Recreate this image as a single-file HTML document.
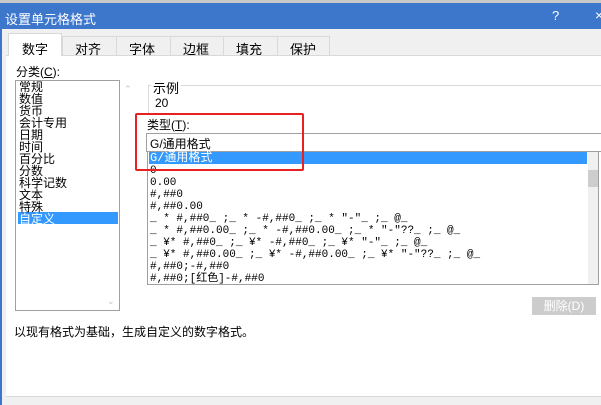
<!DOCTYPE html>
<html><head><meta charset="utf-8"><style>
*{margin:0;padding:0;box-sizing:border-box}
body{width:601px;height:405px;overflow:hidden;background:#f0f0f0;position:relative;font-family:"Liberation Sans","Noto Sans CJK SC",sans-serif;font-size:12px;color:#000}
.a{position:absolute;white-space:nowrap}
.t{font-family:"SimSun","Noto Sans CJK SC",sans-serif;font-size:12px;line-height:12px}
.m{font-family:"Liberation Mono","Noto Sans CJK SC",monospace;font-size:11px;line-height:12px}
</style></head><body>
<div class="a" style="left:0;top:0;width:601px;height:3px;background:#c8c8c8"></div>
<div class="a" style="left:0;top:3px;width:601px;height:26px;background:#3d77cc"></div>
<div class="a" style="left:5px;top:9px;color:#fff;font-size:13px">设置单元格格式</div>
<div class="a" style="left:552px;top:8px;color:#fff;font-size:13px">?</div>
<div class="a" style="left:595px;top:7px;color:#fff;font-size:14px">×</div>
<div class="a" style="left:0;top:29px;width:2px;height:376px;background:#3d77cc"></div>
<!-- tabs -->
<div class="a" style="left:6px;top:55px;width:595px;height:342px;background:#fff;border-top:1px solid #d9d9d9;border-bottom:1px solid #d9d9d9"></div>
<div class="a" style="left:8px;top:33px;width:54px;height:23px;background:#fff;border:1px solid #d9d9d9;border-bottom:none"></div>
<div class="a" style="left:62px;top:36px;width:268px;height:19px;border:1px solid #d9d9d9;border-bottom:none"></div>
<div class="a" style="left:116px;top:36px;width:1px;height:19px;background:#d9d9d9"></div>
<div class="a" style="left:170px;top:36px;width:1px;height:19px;background:#d9d9d9"></div>
<div class="a" style="left:223px;top:36px;width:1px;height:19px;background:#d9d9d9"></div>
<div class="a" style="left:277px;top:36px;width:1px;height:19px;background:#d9d9d9"></div>
<div class="a" style="left:22px;top:39px;font-size:13px">数字</div>
<div class="a" style="left:75px;top:39px;font-size:13px">对齐</div>
<div class="a" style="left:129px;top:39px;font-size:13px">字体</div>
<div class="a" style="left:183px;top:39px;font-size:13px">边框</div>
<div class="a" style="left:236px;top:39px;font-size:13px">填充</div>
<div class="a" style="left:290px;top:39px;font-size:13px">保护</div>
<div class="a" style="left:16px;top:63px">分类(<u>C</u>):</div>
<!-- left list -->
<div class="a" style="left:15px;top:80px;width:105px;height:231px;border:1px solid #a0a0a0;background:#fff"></div>
<div class="a" style="left:18px;top:212px;width:100px;height:12px;background:#3399ff"></div>
<div class="a t" style="left:19px;top:81px">常规<br>数值<br>货币<br>会计专用<br>日期<br>时间<br>百分比<br>分数<br>科学记数<br>文本<br>特殊<br><span style="color:#fff">自定义</span></div>
<div class="a" style="left:124px;top:84px;color:#c0c0c0;font-size:9px">⌃</div>
<div class="a" style="left:107px;top:296px;color:#c0c0c0;font-size:9px">⌄</div>
<!-- sample -->
<div class="a" style="left:148px;top:85px;width:453px;height:1px;background:#d9d9d9"></div>
<div class="a" style="left:148px;top:85px;width:1px;height:28px;background:#d9d9d9"></div>
<div class="a" style="left:151px;top:78px;background:#fff;padding:0 2px;font-size:13px">示例</div>
<div class="a" style="left:155px;top:96px">20</div>
<div class="a" style="left:147px;top:116px;font-size:12px">类型(<u>T</u>):</div>
<div class="a" style="left:146px;top:133px;width:460px;height:19px;border:1px solid #a0a0a0;border-right:none;background:#fff"></div>
<div class="a" style="left:150px;top:135px;font-size:12px">G/通用格式</div>
<!-- list -->
<div class="a" style="left:147px;top:151px;width:452px;height:134px;border:1px solid #a0a0a0;background:#fff"></div>
<div class="a" style="left:149px;top:152px;width:438px;height:12px;background:#3399ff"></div>
<div class="a" style="left:588px;top:152px;width:10px;height:132px;background:#f0f0f0"></div>
<div class="a" style="left:588px;top:170px;width:10px;height:17px;background:#cdcdcd"></div>
<div class="a m" style="left:150px;top:152px"><span style="color:#fff;font-size:12px">G/通用格式</span><br>0<br>0.00<br>#,##0<br>#,##0.00<br>_ * #,##0_ ;_ * -#,##0_ ;_ * "-"_ ;_ @_<br>_ * #,##0.00_ ;_ * -#,##0.00_ ;_ * "-"??_ ;_ @_<br>_ ¥* #,##0_ ;_ ¥* -#,##0_ ;_ ¥* "-"_ ;_ @_<br>_ ¥* #,##0.00_ ;_ ¥* -#,##0.00_ ;_ ¥* "-"??_ ;_ @_<br>#,##0;-#,##0<br>#,##0;[红色]-#,##0</div>
<!-- red box -->
<div class="a" style="left:135px;top:113px;width:169px;height:58px;border:2.5px solid #e82020;border-radius:2px"></div>
<!-- delete -->
<div class="a" style="left:532px;top:297px;width:64px;height:18px;background:#cccccc;color:#fff;text-align:center;line-height:18px;font-size:12px">删除(D)</div>
<div class="a" style="left:14px;top:323px;font-size:12px">以现有格式为基础，生成自定义的数字格式。</div>
</body></html>
